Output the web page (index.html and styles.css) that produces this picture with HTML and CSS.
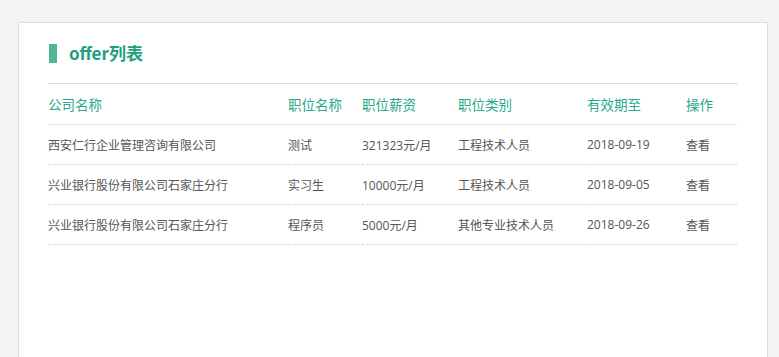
FILE: index.html
```html
<!DOCTYPE html>
<html lang="zh">
<head>
<meta charset="utf-8">
<link rel="stylesheet" href="styles.css">
</head>
<body>
<div class="card">
  <div class="title"><span class="bar"></span><span class="title-text">offer列表</span></div>
  <table class="list">
    <thead>
      <tr>
        <th class="c1">公司名称</th>
        <th class="c2">职位名称</th>
        <th class="c3">职位薪资</th>
        <th class="c4">职位类别</th>
        <th class="c5">有效期至</th>
        <th class="c6">操作</th>
      </tr>
    </thead>
    <tbody>
      <tr>
        <td>西安仁行企业管理咨询有限公司</td>
        <td>测试</td>
        <td>321323元/月</td>
        <td>工程技术人员</td>
        <td>2018-09-19</td>
        <td>查看</td>
      </tr>
      <tr>
        <td>兴业银行股份有限公司石家庄分行</td>
        <td>实习生</td>
        <td>10000元/月</td>
        <td>工程技术人员</td>
        <td>2018-09-05</td>
        <td>查看</td>
      </tr>
      <tr>
        <td>兴业银行股份有限公司石家庄分行</td>
        <td>程序员</td>
        <td>5000元/月</td>
        <td>其他专业技术人员</td>
        <td>2018-09-26</td>
        <td>查看</td>
      </tr>
    </tbody>
  </table>
</div>
</body>
</html>
```
FILE: styles.css
```css
html, body {
  margin: 0;
  padding: 0;
  background: #f3f3f3;
  font-family: "Noto Sans CJK SC", "Open Sans", sans-serif;
}
body {
  padding: 22px 0 0 18px;
}
.card {
  box-sizing: border-box;
  width: 750px;
  height: 335px;
  background: #fff;
  border: 1px solid #dcdcdc;
  border-bottom-width: 0;
  padding: 20px 29px 0 29px;
}
.title {
  display: flex;
  align-items: center;
  height: 20px;
  padding-bottom: 20px;
  border-bottom: 1px solid #dedede;
}
.bar {
  display: block;
  width: 8px;
  height: 19px;
  background: #52b595;
  margin-left: 1px;
  margin-right: 12px;
}
.title-text {
  font-size: 17px;
  font-weight: bold;
  color: #1e9f81;
  line-height: 20px;
}
.list {
  width: 689px;
  border-collapse: collapse;
  table-layout: fixed;
}
.list th {
  text-align: left;
  font-weight: normal;
  font-size: 13.5px;
  color: #2aa88a;
  height: 40px;
  padding: 0;
  border-bottom: 1px solid #e2e2e2;
}
.list td {
  font-family: "Open Sans", "Noto Sans CJK SC", sans-serif;
  font-size: 12px;
  color: #555;
  height: 39px;
  padding: 0;
  border-bottom: 1px dotted #d6d6d6;
  white-space: nowrap;
}
.c1 { width: 240px; }
.c2 { width: 74px; }
.c3 { width: 96px; }
.c4 { width: 129px; }
.c5 { width: 99px; }
.c6 { width: 51px; }
```
